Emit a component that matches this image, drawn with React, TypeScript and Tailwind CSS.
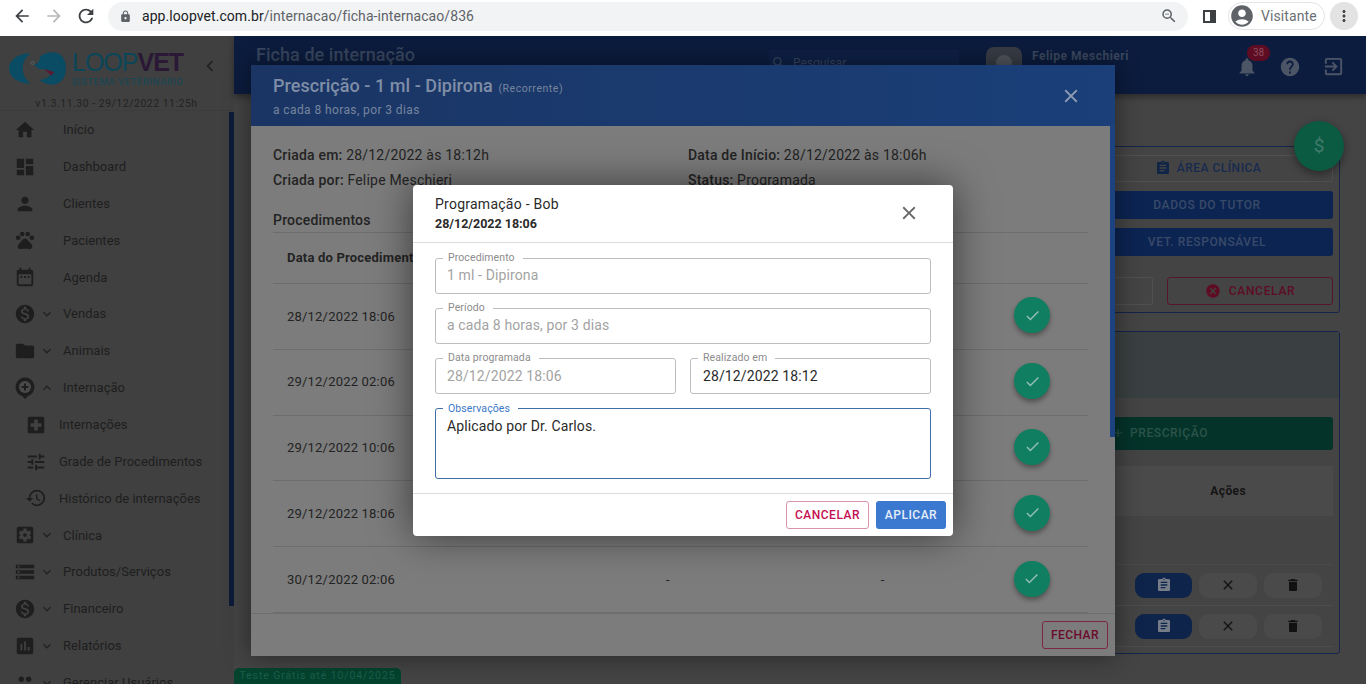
import {
  MdAccountCircle, MdAdd, MdArrowBack, MdArrowForward, MdAssessment, MdAssignment, MdCancel, MdCheck,
  MdChevronLeft, MdClose, MdDashboard, MdDateRange, MdDelete, MdExitToApp, MdExpandLess, MdExpandMore, MdFolder,
  MdHelp, MdHistory, MdHome, MdLocalHospital, MdLock, MdMonetizationOn, MdMoreVert, MdNotifications, MdPeople,
  MdPerson, MdPets, MdRefresh, MdSearch, MdSettingsApplications, MdStorage, MdTune, MdZoomOut,
} from "react-icons/md";
import type { ComponentType } from "react";

interface NavItem {
  icon: ComponentType<{ size?: number }>;
  label: string;
  chevron?: "down" | "up";
  sub?: boolean;
}

function PinIcon({ size = 24 }: { size?: number }) {
  return (
    <svg width={size} height={size} viewBox="0 0 24 24">
      <path d="M12 1.500a9.500 9.500 0 0 0-3 18.500l3 3 3-3a9.500 9.500 0 0 0-3-18.500Z" fill="#1e1e1e" />
      <circle cx="12" cy="11" r="6" fill="#4a4a4a" />
      <path d="M11 7.500h2V10h2.500v2H13v2.500h-2V12H8.500v-2H11Z" fill="#1e1e1e" />
    </svg>
  );
}

const navItems: NavItem[] = [
  { icon: MdHome, label: "Início" },
  { icon: MdDashboard, label: "Dashboard" },
  { icon: MdPerson, label: "Clientes" },
  { icon: MdPets, label: "Pacientes" },
  { icon: MdDateRange, label: "Agenda" },
  { icon: MdMonetizationOn, label: "Vendas", chevron: "down" },
  { icon: MdFolder, label: "Animais", chevron: "down" },
  { icon: PinIcon, label: "Internação", chevron: "up" },
  { icon: MdLocalHospital, label: "Internações", sub: true },
  { icon: MdTune, label: "Grade de Procedimentos", sub: true },
  { icon: MdHistory, label: "Histórico de internações", sub: true },
  { icon: MdSettingsApplications, label: "Clínica", chevron: "down" },
  { icon: MdStorage, label: "Produtos/Serviços", chevron: "down" },
  { icon: MdMonetizationOn, label: "Financeiro", chevron: "down" },
  { icon: MdAssessment, label: "Relatórios", chevron: "down" },
  { icon: MdPeople, label: "Gerenciar Usuários", chevron: "down" },
];

const procedures = ["28/12/2022 18:06", "29/12/2022 02:06", "29/12/2022 10:06", "29/12/2022 18:06", "30/12/2022 02:06"];

function BrowserBar() {
  return (
    <div className="h-9 shrink-0 bg-white flex items-center pb-[4px] text-[#5f6368]">
      <MdArrowBack size={20} className="ml-3 text-[#3c4043]" />
      <MdArrowForward size={20} className="ml-3 text-[#b6b8bb]" />
      <MdRefresh size={22} className="ml-[11px] text-[#3c4043]" />
      <div className="ml-[11px] w-[1080px] h-[29px] rounded-full bg-[#f1f3f4] flex items-center">
        <MdLock size={13} className="ml-[11px] text-[#5f6368]" />
        <span className="ml-[10px] text-[14px] tracking-[0.07px] text-[#5f6368]">
          <span className="text-[#202124]">app.loopvet.com.br</span>/internacao/ficha-internacao/836
        </span>
        <MdZoomOut size={18} className="ml-auto mr-[10px]" />
      </div>
      <div className="ml-[15px] w-[13px] h-[13px] border-2 border-[#3c4043] border-r-[6px] box-border" />
      <div className="ml-[12px] w-[97px] h-[28px] rounded-full border border-[#e3e4e6] flex items-center">
        <MdAccountCircle size={26} className="text-[#5f6368]" />
        <span className="ml-[6px] text-[14px] tracking-[0.1px] text-[#6b6f73]">Visitante</span>
      </div>
      <div className="ml-[5px] w-7 h-7 rounded-full bg-[#e3e3e3] flex items-center justify-center">
        <MdMoreVert size={18} className="text-[#3c4043]" />
      </div>
    </div>
  );
}

function Logo() {
  return (
    <div className="flex items-start pl-[9px] pt-[16px]">
      <svg width="57" height="33" viewBox="0 0 58 33" className="shrink-0">
        <path d="M22 1C9 1 0 8 0 16.500S9 32 22 32C17 28 14 23 14 16.500S17 5 22 1Z" fill="#0a4c63" />
        <path d="M32 4C36 1 41 0 45 0C53 0 58 7 58 16.500S52 33 44 33C39 33 34 31 31 28C36 28 41 25 43 21L36 17C31 18 27 16 26 12C29 12 31 9 32 4Z" fill="#0a4c63" />
        <path d="M36 17L46 20L43 24Z" fill="#5a1a30" />
        <circle cx="24" cy="11" r="1.500" fill="none" stroke="#5c6a6e" strokeWidth="0.800" />
      </svg>
      <div className="ml-[6px] -mt-[2px] w-[112px] shrink-0">
        <div className="text-[25px] leading-[24px] tracking-[-1px] text-[#0b4659] font-['Liberation_Sans',sans-serif]">
          LOOP<span className="font-bold text-[#2a1836]">VET</span>
        </div>
        <div className="mt-[2px] text-[9.500px] leading-[11px] tracking-[0.55px] text-[#124858]">SISTEMA VETERINARIO</div>
      </div>
      <MdChevronLeft size={22} className="ml-[15px] mt-[3px] text-[#222]" />
    </div>
  );
}

function Sidebar() {
  return (
    <aside className="w-[234px] shrink-0 bg-[#404040] flex flex-col overflow-hidden">
      <div className="h-[75.400px] shrink-0 border-b border-[#3c3c3c]">
        <Logo />
        <div className="mt-[11px] text-center text-[10.500px] leading-3 tracking-[0.5px] text-[#232323] pr-[1px]">v1.3.11.30 - 29/12/2022 11:25h</div>
      </div>
      <div className="relative flex-1">
        <div className="absolute right-0 top-[1px] h-[494px] w-[5px] bg-[#0d1b3a]" />
        {navItems.map((item) => (
          <div key={item.label} className="h-[36.870px] flex items-center text-[#1e1e1e]">
            <div className={`flex items-center justify-center w-6 ${item.sub ? "ml-[24px]" : "ml-[13px]"}`}>
              <item.icon size={item.label === "Internação" ? 26 : 22} />
            </div>
            {item.chevron === "down" && <MdExpandMore size={16} className="ml-[2px] text-[#232323]" />}
            {item.chevron === "up" && <MdExpandLess size={16} className="ml-[2px] text-[#232323]" />}
            <span className={`text-[13px] tracking-[0.02px] ${item.sub ? "ml-[11px]" : item.chevron ? "ml-[8px]" : "ml-[26px]"}`}>
              {item.label}
            </span>
          </div>
        ))}
      </div>
    </aside>
  );
}

function TopBar() {
  return (
    <div className="h-[58px] shrink-0 bg-[#0c1c3e] relative flex items-start text-[#35445c] shadow-[0_3px_6px_rgba(0,0,0,0.35)]">
      <span className="ml-[22px] mt-[5px] text-[18px] tracking-[0.05px] font-medium text-[#38465f]">Ficha de internação</span>
      <div className="absolute left-[535px] top-[14px] w-[190px] h-[26px] bg-[#0e2046] flex items-center">
        <MdSearch size={16} className="ml-[2px]" />
        <span className="ml-[6px] text-[12px]">Pesquisar</span>
      </div>
      <div className="absolute left-[752px] top-[11px] w-[36px] h-[26px] rounded-t-lg bg-[#383c46] flex justify-center pt-[8px]">
        <div className="w-4 h-4 rounded-full bg-[#50545c]" />
      </div>
      <span className="absolute left-[798px] top-[11px] text-[12px] font-bold tracking-[0.5px] text-[#3b485f]">Felipe Meschieri</span>
      <div className="absolute left-[1002px] top-[19px] flex items-center gap-[21px] text-[#4b5566]">
        <MdNotifications size={22} />
        <MdHelp size={22} />
        <MdExitToApp size={23} />
      </div>
      <span className="absolute left-[1013px] top-[9px] h-4 w-[23px] rounded-full bg-[#5e0c23] text-center text-[10px] leading-4 text-[#8b4d5f]">38</span>
    </div>
  );
}

function BackgroundPage() {
  return (
    <div className="flex-1 bg-[#444444] flex justify-end pr-[26px] overflow-hidden">
      <div className="w-[300px] flex flex-col">
        <div className="mt-[52px] h-[167px] border border-[#15244a] rounded-[3px] pt-[8px] pl-[40px] pr-[6px] flex flex-col">
          <div className="h-[27px] shrink-0 border border-[#505050] rounded-[3px] flex items-center justify-center gap-[6px] pb-[1px] pl-[2px]">
            <MdAssignment size={16} className="text-[#102548]" />
            <span className="text-[12px] font-medium tracking-[0.5px] text-[#172a50]">ÁREA CLÍNICA</span>
          </div>
          <div className="mt-[9px] h-[28px] shrink-0 bg-[#0c2452] rounded-[3px] flex items-center justify-center text-[12px] font-medium tracking-[0.6px] text-[#384a68]">DADOS DO TUTOR</div>
          <div className="mt-[9px] h-[28px] shrink-0 bg-[#0c2452] rounded-[3px] flex items-center justify-center text-[12px] font-medium tracking-[0.6px] text-[#384a68]">VET. RESPONSÁVEL</div>
          <div className="mt-[21px] flex gap-[14px]">
            <div className="w-[72px] h-[28px] border border-[#505050] rounded-[3px]" />
            <div className="flex-1 h-[28px] border border-[#561629] rounded-[3px] flex items-center justify-center gap-[8px] text-[#5e0c24]">
              <MdCancel size={16} />
              <span className="text-[12px] font-medium tracking-[0.7px]">CANCELAR</span>
            </div>
          </div>
        </div>
        <div className="mt-[18px] h-[323px] border border-[#15244a] rounded-[3px] flex flex-col pl-[40px] pr-[6px]">
          <div className="h-[66px] shrink-0 -ml-[40px] -mr-[6px] bg-[#3a4041]" />
          <div className="mt-[19px] h-[33px] shrink-0 bg-[#04332a] rounded-[3px] flex items-center pl-[30px] pb-[2px] gap-[5px] text-[12px] font-medium tracking-[0.6px] text-[#2b5348]">
            <MdAdd size={14} />
            PRESCRIÇÃO
          </div>
          <div className="mt-[16px] h-[50px] shrink-0 bg-[#4a4a4a] flex items-center justify-end pr-[87px] text-[12px] font-bold tracking-[0.4px] text-[#151515]">Ações</div>
          <div className="h-[49px] shrink-0 border-b border-[#4a4a4a]" />
          <div className="flex-1 flex flex-col">
            {[0, 1].map((row) => (
              <div key={row} className="h-[41px] shrink-0 border-b border-[#4d4d4d] flex items-center justify-end gap-[7px] pr-[11px]">
                <div className="w-[57px] h-[25px] rounded-[9px] bg-[#0f244a] flex items-center justify-center text-[#767d88]"><MdAssignment size={16} /></div>
                <div className="w-[58px] h-[25px] rounded-[9px] bg-[#4a4a4a] flex items-center justify-center text-[#111]"><MdClose size={16} /></div>
                <div className="w-[58px] h-[25px] rounded-[9px] bg-[#4a4a4a] flex items-center justify-center text-[#111]"><MdDelete size={16} /></div>
              </div>
            ))}
          </div>
        </div>
      </div>
    </div>
  );
}

function PrescriptionModal() {
  return (
    <div className="absolute left-[251px] top-[29px] w-[864px] h-[591px] flex flex-col bg-[#7c7c7c] shadow-[0_0_24px_rgba(0,0,0,0.45)]">
      <div className="h-[61px] shrink-0 bg-gradient-to-r from-[#1a3564] to-[#1a3f79] flex items-start justify-between pl-[22px] pr-[33px]">
        <div>
          <div className="mt-[9px] text-[18px] leading-6 tracking-[0.05px] font-medium text-[#7f8ea6]">
            Prescrição - 1 ml - Dipirona <span className="ml-[1px] text-[10.500px] font-normal tracking-[0.55px] text-[#76859e]">(Recorrente)</span>
          </div>
          <div className="mt-[1px] text-[12px] leading-4 tracking-[0.4px] text-[#76859e]">a cada 8 horas, por 3 dias</div>
        </div>
        <MdClose size={22} className="mt-[20px] text-[#8f9cb3]" />
      </div>
      <div className="relative flex-1 overflow-hidden pl-[22px] pr-[27px] text-[#232323] text-[14px] tracking-[0.2px]">
        <div className="absolute right-0 top-0 h-[311px] w-[5px] bg-[#1c4380]" />
        <div className="mt-[17px] grid grid-cols-[415px_1fr] leading-[25px]">
          <div><b className="font-medium">Criada em:</b> 28/12/2022 às 18:12h</div>
          <div><b className="font-medium">Data de Início:</b> 28/12/2022 às 18:06h</div>
          <div><b className="font-medium">Criada por:</b> Felipe Meschieri</div>
          <div><b className="font-medium">Status:</b> Programada</div>
        </div>
        <div className="mt-[19px] h-[21px] font-medium border-b border-[#6d6d6d] leading-[16px]">Procedimentos</div>
        <div className="h-[51px] border-b border-[#6d6d6d] flex items-center pl-[14px] text-[13px] font-bold tracking-[0.2px]">Data do Procedimento</div>
        {procedures.map((date, i) => (
          <div key={date} className="h-[65.800px] border-b border-[#6d6d6d] flex items-center pl-[14px] text-[13px] tracking-[0.2px]">
            <span className="w-[379px]">{date}</span>
            {i === 4 && (
              <>
                <span>-</span>
                <span className="ml-[211px]">-</span>
              </>
            )}
            <div className={`${i === 4 ? "ml-[129px]" : "ml-[348px]"} w-9 h-9 -translate-y-[1px] rounded-full bg-[#107e60] flex items-center justify-center text-[#94bfb2] shadow-[0_3px_5px_rgba(0,0,0,0.35)]`}>
              <MdCheck size={17} />
            </div>
          </div>
        ))}
      </div>
      <div className="h-[43px] shrink-0 border-t border-[#6f6f6f] flex items-center justify-end pr-[7px]">
        <div className="w-[66px] h-[28px] rounded-[3px] border border-[#7d2742] flex items-center justify-center text-[12px] font-medium tracking-[0.45px] text-[#6d0a2b]">FECHAR</div>
      </div>
    </div>
  );
}

function Field({ label, value, disabled, focused, tall, low }: { label: string; value: string; disabled?: boolean; focused?: boolean; tall?: boolean; low?: boolean }) {
  return (
    <div className={`relative w-full rounded-[3px] border ${focused ? "border-[#3f6ea8]" : "border-[#bdbdbd]"} ${tall ? "h-[71px] pt-[9px]" : low ? "h-9 flex items-center" : "h-9 flex items-center pb-[2px]"} ${low && !disabled ? "pl-[12px]" : "pl-[11px]"}`}>
      <span className={`absolute left-[7px] bg-white pl-[5px] pr-[8px] text-[10.500px] leading-3 tracking-[0.1px] ${focused ? "-top-[6px] text-[#3b78c8]" : "-top-[7px] text-[#8c8c8c]"}`}>
        {label}
      </span>
      <span className={`block text-[14px] leading-4 tracking-[0.12px] ${disabled ? "text-[#a3a3a3]" : "text-[#2a2a2a]"}`}>{value}</span>
    </div>
  );
}

function ScheduleModal() {
  return (
    <div className="absolute left-[413px] top-[149px] w-[540px] h-[351px] bg-white rounded-[4px] flex flex-col shadow-[0_0_40px_rgba(0,0,0,0.55)]">
      <div className="h-[58px] shrink-0 border-b border-[#dcdcdc] flex items-start justify-between pl-[22px] pr-[33px]">
        <div className="pt-[11px]">
          <div className="text-[14px] leading-4 tracking-[0.25px] text-[#2a2a2a]">Programação - Bob</div>
          <div className="mt-[4px] text-[12.500px] leading-4 font-bold text-[#2a2a2a]">28/12/2022 18:06</div>
        </div>
        <MdClose size={22} className="mt-[17px] text-[#666]" />
      </div>
      <div className="flex-1 px-[22px] pt-[15px] flex flex-col gap-[14px]">
        <Field label="Procedimento" value="1 ml - Dipirona" disabled />
        <Field label="Período" value="a cada 8 horas, por 3 dias" disabled />
        <div className="grid grid-cols-2 gap-[14px]">
          <Field label="Data programada" value="28/12/2022 18:06" disabled low />
          <Field label="Realizado em" value="28/12/2022 18:12" low />
        </div>
        <Field label="Observações" value="Aplicado por Dr. Carlos." focused tall />
      </div>
      <div className="h-[43px] shrink-0 border-t border-[#dcdcdc] flex items-start justify-end gap-[7px] pt-[7px] pr-[7px]">
        <div className="w-[83px] h-[28px] rounded-[3px] border border-[#d994ac] flex items-center justify-center text-[12px] font-medium tracking-[0.5px] text-[#c50f50]">CANCELAR</div>
        <div className="w-[70px] h-[28px] rounded-[3px] bg-[#3b78d0] flex items-center justify-center text-[12px] font-medium tracking-[0.5px] text-[#e6eefa]">APLICAR</div>
      </div>
    </div>
  );
}

export default function App() {
  return (
    <div className="w-[1366px] h-[688px] bg-white overflow-hidden flex flex-col font-['Roboto',sans-serif]">
      <BrowserBar />
      <div className="relative h-[648px] shrink-0 flex overflow-hidden">
        <Sidebar />
        <div className="flex-1 flex flex-col">
          <TopBar />
          <BackgroundPage />
        </div>

        <div className="absolute left-[1294px] top-[85px] w-[50px] h-[50px] rounded-full bg-[#0b5a42] flex items-center justify-center text-[19px] text-[#417a69] shadow-[0_3px_8px_rgba(0,0,0,0.4)]">$</div>
        <div className="absolute left-[234px] top-[632px] w-[167px] h-[16px] rounded-t-[5px] bg-[#04442f] text-center text-[10.500px] leading-[16px] tracking-[0.9px] text-[#1c5f4b]">Teste Grátis até 10/04/2025</div>

        <PrescriptionModal />
        <ScheduleModal />
      </div>
    </div>
  );
}
